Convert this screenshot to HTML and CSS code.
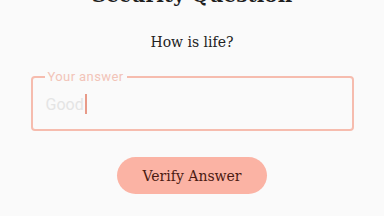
FILE: index.html
```html
<!DOCTYPE html>
<html lang="en">

<head>
    <meta charset="UTF-8">
    <title>Security Question</title>
    <link rel="stylesheet" href="styles.css">
</head>

<body>
    <div class="page">
        <h1 class="title">Security Question</h1>
        <p class="question">How is life?</p>

        <fieldset class="answer">
            <legend>Your answer</legend>
            <div class="field">Good<span class="caret"></span></div>
        </fieldset>

        <button class="verify">Verify Answer</button>
    </div>
</body>

</html>
```

FILE: styles.css
```css
body {
    margin: 0;
    background-color: #fafafa;
    font-family: "DejaVu Serif", serif;
    height: 216px;
    overflow: hidden;
}

.page {
    display: flex;
    flex-direction: column;
    align-items: center;
}

.title {
    margin: -17px 0 0;
    font-size: 20px;
    font-weight: bold;
    color: #1e1e1e;
}

.question {
    margin: 27px 0 0;
    font-size: 14px;
    color: #222;
}

.answer {
    box-sizing: border-box;
    width: 323px;
    height: 60px;
    margin: 21px 0 0;
    padding: 0 13px;
    border: 2px solid #f6bcae;
    border-radius: 4px;
}

.answer legend {
    padding: 0 3px;
    margin-left: -1px;
    font-family: Roboto, sans-serif;
    font-size: 13px;
    letter-spacing: 0.4px;
    color: #f2c4b8;
    line-height: 12px;
}

.field {
    display: flex;
    align-items: center;
    height: 46px;
    margin-top: -2px;
    font-family: Roboto, sans-serif;
    font-size: 16px;
    color: #e4e4e4;
}

.caret {
    width: 2px;
    height: 20px;
    margin-left: 1px;
    background-color: #e89a88;
}

.verify {
    margin-top: 26px;
    width: 150px;
    height: 37px;
    border: none;
    border-radius: 19px;
    background-color: #fbb3a4;
    color: #4a1a12;
    font-family: "DejaVu Serif", serif;
    font-size: 14px;
    cursor: pointer;
}
```
